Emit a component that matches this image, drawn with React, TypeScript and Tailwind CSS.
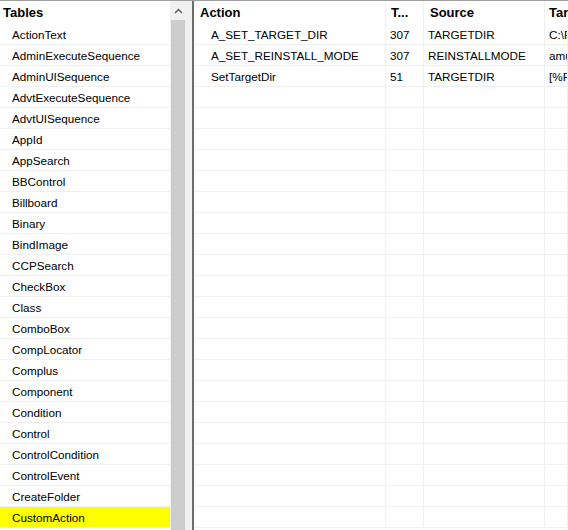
const tables = [
  'ActionText',
  'AdminExecuteSequence',
  'AdminUISequence',
  'AdvtExecuteSequence',
  'AdvtUISequence',
  'AppId',
  'AppSearch',
  'BBControl',
  'Billboard',
  'Binary',
  'BindImage',
  'CCPSearch',
  'CheckBox',
  'Class',
  'ComboBox',
  'CompLocator',
  'Complus',
  'Component',
  'Condition',
  'Control',
  'ControlCondition',
  'ControlEvent',
  'CreateFolder',
  'CustomAction',
];

const actions = [
  { action: 'A_SET_TARGET_DIR', type: '307', source: 'TARGETDIR', target: 'C:\\Program Files' },
  { action: 'A_SET_REINSTALL_MODE', type: '307', source: 'REINSTALLMODE', target: 'amus' },
  { action: 'SetTargetDir', type: '51', source: 'TARGETDIR', target: '[%ProgramFiles]' },
];

const cols = 'grid grid-cols-[192px_38px_121px_1fr]';
const cell = 'h-[21px] leading-[22px] border-b border-r border-[#f0f0f0] overflow-hidden whitespace-nowrap';

const App = () => {
  const emptyRows = Array.from({ length: tables.length - actions.length });

  return (
    <div className="w-[568px] h-[530px] flex border-t border-[#a0a0a0] bg-white overflow-hidden text-black text-[11.7px] font-['Segoe_UI','Liberation_Sans',sans-serif]">
      {/* tables list */}
      <div className="w-[170px] shrink-0 flex flex-col">
        <div className="h-[23px] pl-[3px] leading-[24px] text-[13px] font-bold">Tables</div>
        {tables.map((t) => (
          <div
            key={t}
            className={`h-[21px] leading-[22px] pl-[12px] border-b border-[#f0f0f0] ${
              t === 'CustomAction' ? 'bg-[#ffff00]' : ''
            }`}
          >
            {t}
          </div>
        ))}
      </div>

      {/* scrollbar */}
      <div className="w-[17px] shrink-0 bg-[#f0f0f0] flex flex-col">
        <div className="h-[19px] flex items-center justify-center">
          <svg width="9" height="6" viewBox="0 0 9 6">
            <path d="M1 5 L4.5 1.5 L8 5" fill="none" stroke="#606060" strokeWidth="1.5" />
          </svg>
        </div>
        <div className="flex-1 ml-[1px] mr-[2px] bg-[#cdcdcd]" />
      </div>

      {/* splitter */}
      <div className="w-[5px] shrink-0 bg-[#f0f0f0] border-r-2 border-[#6d6d6d] box-content" />

      {/* custom action table */}
      <div className="flex-1 flex flex-col min-w-0">
        <div className={`${cols} h-[23px] leading-[24px] text-[13px] font-bold`}>
          <div className="pl-[6px] border-r border-[#f0f0f0]">Action</div>
          <div className="pl-[5px] border-r border-[#f0f0f0]">T...</div>
          <div className="pl-[6px] border-r border-[#f0f0f0]">Source</div>
          <div className="pl-[4px] whitespace-nowrap overflow-hidden">Target</div>
        </div>
        {actions.map((a) => (
          <div key={a.action} className={cols}>
            <div className={`${cell} pl-[17px]`}>{a.action}</div>
            <div className={`${cell} pl-[4px]`}>{a.type}</div>
            <div className={`${cell} pl-[4px]`}>{a.source}</div>
            <div className={`${cell} pl-[4px]`}>{a.target}</div>
          </div>
        ))}
        {emptyRows.map((_, i) => (
          <div key={i} className={cols}>
            <div className={cell} />
            <div className={cell} />
            <div className={cell} />
            <div className={cell} />
          </div>
        ))}
      </div>
    </div>
  );
};

export default App;
